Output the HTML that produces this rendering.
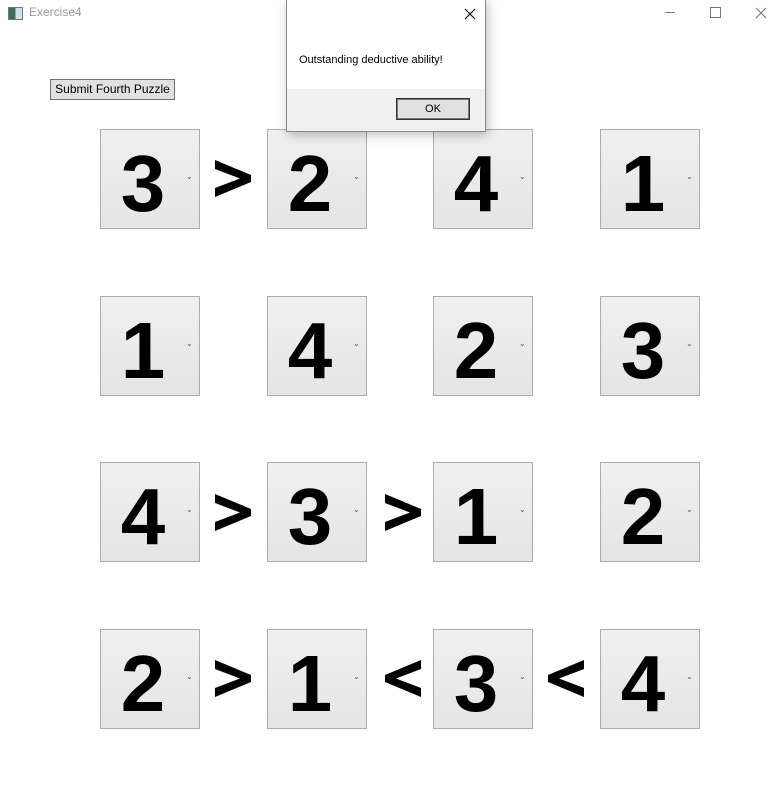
<!DOCTYPE html>
<html><head><style>
body{margin:0;width:778px;height:786px;background:#fff;position:relative;overflow:hidden;font-family:"Liberation Sans",sans-serif}
.a{position:absolute;white-space:nowrap}
.box{position:absolute;width:98px;height:98px;border:1px solid #acacac;background:linear-gradient(#f0f0f0,#e5e5e5)}
.box .d{position:absolute;left:2px;width:80px;text-align:center;top:14px;font:bold 80px/80px "Liberation Sans",sans-serif;color:#000}
.box .c{position:absolute;left:85px;top:42px;font-size:8px;color:#555}
</style></head><body>
<div class="a" style="left:8px;top:7px;width:13px;height:11px;border:1px solid #777;background:linear-gradient(90deg,#3a6e5a 50%,#cfe0e8 50%)"></div>
<div class="a" style="left:29px;top:5px;font-size:12px;color:#999">Exercise4</div>
<div class="a" style="left:665px;top:12px;width:10px;border-top:1px solid #777"></div>
<div class="a" style="left:710px;top:7px;width:9px;height:9px;border:1px solid #777"></div>
<svg class="a" style="left:755px;top:7px" width="12" height="12"><path d="M1 1L11 11M11 1L1 11" stroke="#777" stroke-width="1"/></svg>
<div class="a" style="left:50px;top:79px;width:123px;height:19px;border:1px solid #707070;background:#e1e1e1;font-size:12px;line-height:19px;text-align:center">Submit Fourth Puzzle</div>

<div class="box" style="left:100px;top:129px"><div class="d">3</div><div class="c">⌄</div></div>
<div class="box" style="left:267px;top:129px"><div class="d">2</div><div class="c">⌄</div></div>
<div class="box" style="left:433px;top:129px"><div class="d">4</div><div class="c">⌄</div></div>
<div class="box" style="left:600px;top:129px"><div class="d">1</div><div class="c">⌄</div></div>
<div class="box" style="left:100px;top:296px"><div class="d">1</div><div class="c">⌄</div></div>
<div class="box" style="left:267px;top:296px"><div class="d">4</div><div class="c">⌄</div></div>
<div class="box" style="left:433px;top:296px"><div class="d">2</div><div class="c">⌄</div></div>
<div class="box" style="left:600px;top:296px"><div class="d">3</div><div class="c">⌄</div></div>
<div class="box" style="left:100px;top:462px"><div class="d">4</div><div class="c">⌄</div></div>
<div class="box" style="left:267px;top:462px"><div class="d">3</div><div class="c">⌄</div></div>
<div class="box" style="left:433px;top:462px"><div class="d">1</div><div class="c">⌄</div></div>
<div class="box" style="left:600px;top:462px"><div class="d">2</div><div class="c">⌄</div></div>
<div class="box" style="left:100px;top:629px"><div class="d">2</div><div class="c">⌄</div></div>
<div class="box" style="left:267px;top:629px"><div class="d">1</div><div class="c">⌄</div></div>
<div class="box" style="left:433px;top:629px"><div class="d">3</div><div class="c">⌄</div></div>
<div class="box" style="left:600px;top:629px"><div class="d">4</div><div class="c">⌄</div></div>

<svg class="a" style="left:0;top:0" width="778" height="786">
<defs>
<polygon id="gt" points="0,0 36,15 36,22 0,37 0,28 25,18.5 0,9"/>
<polygon id="lt" points="36,0 0,15 0,22 36,37 36,28 11,18.5 36,9"/>
</defs>
<use href="#gt" x="215" y="160"/>
<use href="#gt" x="215" y="494"/>
<use href="#gt" x="385" y="494"/>
<use href="#gt" x="215" y="660"/>
<use href="#lt" x="385" y="660"/>
<use href="#lt" x="548" y="660"/>
</svg>

<div class="a" style="left:286px;top:-1px;width:198px;height:131px;border:1px solid #888;background:#fff;box-shadow:2px 3px 10px rgba(0,0,0,.25)">
<svg class="a" style="left:177px;top:8px" width="12" height="12"><path d="M1 1L11 11M11 1L1 11" stroke="#000" stroke-width="1.2"/></svg>
<div class="a" style="left:12px;top:54px;font-size:11px;color:#000">Outstanding deductive ability!</div>
<div class="a" style="left:0;top:89px;width:198px;height:42px;background:#f0f0f0"></div>
<div class="a" style="left:109px;top:98px;width:72px;height:20px;border:1px solid #333;box-shadow:inset 0 0 0 1px #777;background:#e1e1e1;font-size:11px;line-height:20px;text-align:center">OK</div>
</div>
</body></html>
